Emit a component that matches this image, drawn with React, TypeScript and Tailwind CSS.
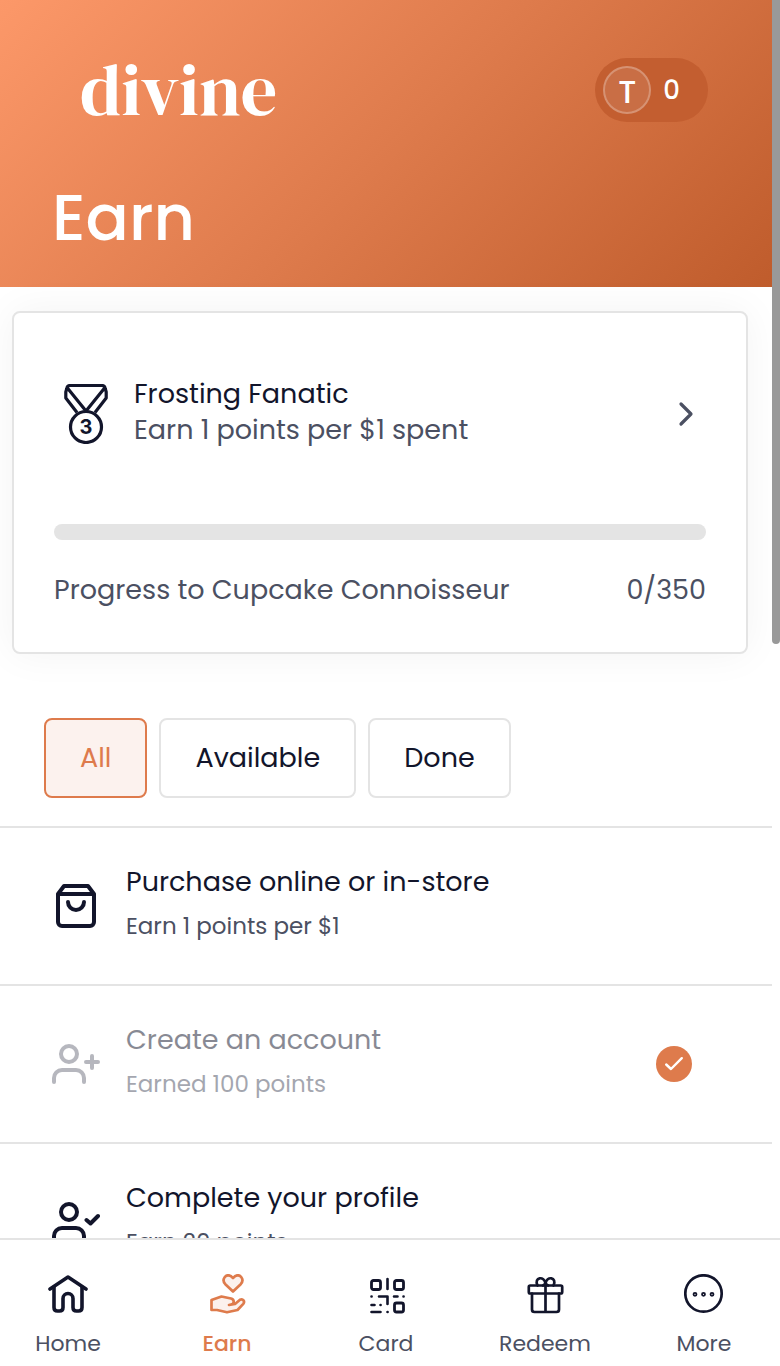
import { useState } from "react";
import type { ReactNode } from "react";

const MedalIcon = () => (
  <svg viewBox="0 0 44 60" className="h-15 w-11" fill="none" stroke="currentColor" strokeWidth="3.200" strokeLinejoin="round" aria-hidden="true">
    <path d="M2.8 4.5C3.2 2.5 4.2 1.500 6 1.500H38C39.800 1.500 40.800 2.500 41.200 4.500L42.200 8V14L31 28.500M2.800 4.500L1.800 8V14L13 28.500" />
    <path d="M3 3.500L22 27L41 3.500" />
    <circle cx="22" cy="43" r="15.500" />
    <text x="22" y="50" textAnchor="middle" fill="currentColor" stroke="none" className="font-[Inter,sans-serif] text-[20px] font-bold">3</text>
  </svg>
);

const ChevronIcon = () => (
  <svg viewBox="0 0 16 26" className="h-[26px] w-4" fill="none" stroke="currentColor" strokeWidth="3.200" strokeLinecap="round" strokeLinejoin="round" aria-hidden="true">
    <path d="M3 3L13 13L3 23" />
  </svg>
);

const BagIcon = () => (
  <svg viewBox="0 0 48 48" className="size-12" fill="none" stroke="currentColor" strokeWidth="4" strokeLinecap="round" strokeLinejoin="round" aria-hidden="true">
    <path d="M6 12L12 4H36L42 12V40A4 4 0 0 1 38 44H10A4 4 0 0 1 6 40ZM6 12H42" />
    <path d="M16 20A8 8 0 0 0 32 20" />
  </svg>
);

const PersonIcon = ({ badge }: { badge: string }) => (
  <svg viewBox="0 0 48 48" className="size-12" fill="none" stroke="currentColor" strokeWidth="4" strokeLinejoin="round" strokeLinecap="round" aria-hidden="true">
    <circle cx="17" cy="14" r="8" />
    <path d="M2 42V38A8 8 0 0 1 10 30H24A8 8 0 0 1 32 38V42" />
    <path d={badge} />
  </svg>
);

const DoneIcon = () => (
  <svg viewBox="0 0 36 36" className="size-9" role="img" aria-label="Done">
    <circle cx="18" cy="18" r="18" fill="#de7b4c" />
    <path d="M10.200 18.500L15 23L25.800 12.200" fill="none" stroke="#fff" strokeWidth="2.400" strokeLinecap="round" strokeLinejoin="round" />
  </svg>
);

const navSvg = "size-10";

const HomeIcon = () => (
  <svg viewBox="0 0 40 40" className={navSvg} fill="none" stroke="currentColor" strokeWidth="3.600" strokeLinecap="round" strokeLinejoin="round" aria-hidden="true">
    <path d="M2 15L20 3L38 15" />
    <path d="M6 13V33.500Q6 37 9.500 37H11.500Q15 37 15 33.500V24.500A5 5 0 0 1 25 24.500V33.500Q25 37 28.500 37H30.500Q34 37 34 33.500V13" />
  </svg>
);

const EarnIcon = () => (
  <svg viewBox="0 0 40 40" className={navSvg} fill="#fcf1ed" stroke="currentColor" strokeWidth="2.700" strokeLinecap="round" strokeLinejoin="round" aria-hidden="true">
    <path d="M26 17.500L18.300 10.200C14 5.500 19-.8 24 2.200L26 4L28 2.200C33-.8 38 5.500 33.700 10.200Z" />
    <path d="M4.500 26L14.500 22.500L24 24.500C27.500 25.300 27.700 30 24 30.500L22 31L28 30L33 25.800C36 24.200 38.200 27.500 36.300 29.800L30.500 36L20 38.300L10 36H4.500Z" />
  </svg>
);

const CardIcon = () => (
  <svg viewBox="0 0 40 40" className={navSvg} fill="none" stroke="currentColor" strokeWidth="2.800" strokeLinecap="round" strokeLinejoin="round" aria-hidden="true">
    <rect x="5.500" y="6.500" width="9" height="9" rx="2" />
    <rect x="28.500" y="6.500" width="9" height="9" rx="2" />
    <rect x="28.500" y="29" width="9" height="9" rx="2" />
    <path d="M21.500 5V15M5.500 22.500H5.600M13 22.500H21.500V30M28 22.500H31.500M37.500 22.500H37.600M5.500 31H8.500M14.500 31H14.600M5.500 38H14.500M21.500 38H21.600" strokeWidth="2.600" />
  </svg>
);

const RedeemIcon = () => (
  <svg viewBox="0 0 40 40" className={navSvg} fill="none" stroke="currentColor" strokeWidth="2.700" strokeLinecap="round" strokeLinejoin="round" aria-hidden="true">
    <rect x="3.800" y="11.500" width="33.400" height="8" rx="1.500" />
    <path d="M7 19.500V35.500Q7 38 9.500 38H31.500Q34 38 34 35.500V19.500M20.500 11.500V38" />
    <path d="M12.500 11.500C8.500 3 19.500 1.500 20.500 9.500C21.500 1.500 32.500 3 28.500 11.500M20.500 9.500L18 11.500M20.500 9.500L23 11.500" />
  </svg>
);

const MoreIcon = () => (
  <svg viewBox="0 0 40 40" className={navSvg} fill="none" stroke="currentColor" strokeWidth="2.700" aria-hidden="true">
    <circle cx="19.500" cy="19.500" r="18.200" />
    <g strokeWidth="1.800">
      <circle cx="11" cy="20.300" r="1.500" />
      <circle cx="19.500" cy="20.300" r="1.500" />
      <circle cx="28" cy="20.300" r="1.500" />
    </g>
  </svg>
);

type Activity = { title: string; detail: string; done: boolean; icon: ReactNode };

const activities: Activity[] = [
  { title: "Purchase online or in-store", detail: "Earn 1 points per $1", done: false, icon: <BagIcon /> },
  { title: "Create an account", detail: "Earned 100 points", done: true, icon: <PersonIcon badge="M34 22H46M40 16V28" /> },
  { title: "Complete your profile", detail: "Earn 20 points", done: false, icon: <PersonIcon badge="M34.500 22L38.500 25.500L46 18" /> },
];

const filters = ["All", "Available", "Done"];

const tabs = [
  { label: "Home", icon: <HomeIcon /> },
  { label: "Earn", icon: <EarnIcon /> },
  { label: "Card", icon: <CardIcon /> },
  { label: "Redeem", icon: <RedeemIcon /> },
  { label: "More", icon: <MoreIcon /> },
];

export default function App() {
  const [filter, setFilter] = useState("All");
  const shown = activities.filter((a) => filter === "All" || a.done === (filter === "Done"));

  return (
    <div className="flex h-screen flex-col bg-white font-[Poppins,Inter,sans-serif] text-[#12152b] [font-feature-settings:'cv11']">
      <div className="flex min-h-0 flex-1">
        <main className="min-w-0 flex-1 overflow-y-auto [scrollbar-width:none]">
          <header className="bg-linear-[135deg,#fc9869,#de7b4c_50%,#bf5c2c] px-13 pt-[58px] pb-[33px] text-white">
            <div className="flex h-16 items-center justify-between pr-3 pl-7">
              <span className="font-['DM_Serif_Display','Playfair_Display','Liberation_Serif',serif] text-[72px] leading-14">divine</span>
              <button type="button" className="flex h-16 items-center gap-3 rounded-full bg-[#c35e30] pr-7 pl-2">
                <span className="flex size-12 items-center justify-center rounded-full border-2 border-white/25 bg-white/10 pt-1 text-[32px] font-medium">T</span>
                <span className="text-[26px] font-medium">0</span>
              </button>
            </div>
            <h1 className="mt-15 text-[64px] leading-[72px] font-medium">Earn</h1>
          </header>

          <section className="mt-6 mr-6 ml-3 rounded-lg border-2 border-[#e4e4e4] bg-white px-10 pt-[63px] pb-11 shadow-[0_0_40px_rgba(0,0,0,0.05)]">
            <button type="button" className="flex w-full items-center pr-3 pl-[10px] text-left">
              <MedalIcon />
              <span className="ml-[26px] flex-1 pb-1">
                <span className="block text-[27px] leading-9">Frosting Fanatic</span>
                <span className="block text-[27px] leading-9 text-[#4b5062]">Earn 1 points per $1 spent</span>
              </span>
              <span className="text-[#4b5062]"><ChevronIcon /></span>
            </button>
            <div role="progressbar" aria-label="Progress to Cupcake Connoisseur" aria-valuemin={0} aria-valuemax={350} aria-valuenow={0} className="mt-[72px] h-4 rounded-full bg-[#e4e4e4]" />
            <div className="mt-8 flex justify-between text-[27px] leading-9 text-[#4b5062]">
              <span>Progress to Cupcake Connoisseur</span>
              <span>0/350</span>
            </div>
          </section>

          <div className="mt-16 mb-7 ml-11 flex gap-3">
            {filters.map((f) => (
              <button
                key={f}
                type="button"
                aria-pressed={filter === f}
                onClick={() => setFilter(f)}
                className={`h-20 rounded-lg border-2 px-[34px] text-[27px] ${filter === f ? "border-[#de7b4c] bg-[#fcf2ee] text-[#de7b4c]" : "border-[#e4e4e4] bg-white"}`}
              >
                {f}
              </button>
            ))}
          </div>

          <ul>
            {shown.map((a) => (
              <li key={a.title} className="flex items-center border-t-2 border-[#e4e4e4] pt-9 pr-20 pb-9 pl-13">
                <span className={a.done ? "opacity-30" : ""}>{a.icon}</span>
                <div className={`ml-[26px] flex-1 pb-1 ${a.done ? "opacity-50" : ""}`}>
                  <h2 className="text-[27px] leading-9">{a.title}</h2>
                  <p className="mt-2 text-[23px] leading-9 text-[#4b5062]">{a.detail}</p>
                </div>
                {a.done && <DoneIcon />}
              </li>
            ))}
          </ul>
        </main>
        <div className="w-2 bg-white" aria-hidden="true">
          <div className="h-[52%] rounded-b bg-[#999]" />
        </div>
      </div>

      <nav className="flex justify-between border-t-2 border-[#e4e4e4] bg-white pt-[34px] pr-7 pb-1 pl-5">
        {tabs.map((t) => (
          <a key={t.label} href="#" aria-current={t.label === "Earn" ? "page" : undefined} className={`flex w-24 flex-col items-center gap-3 ${t.label === "Earn" ? "text-[#de7b4c]" : ""}`}>
            {t.icon}
            <span className={`text-[22px] leading-9 ${t.label === "Earn" ? "font-medium" : "text-[#4b5062]"}`}>{t.label}</span>
          </a>
        ))}
      </nav>
    </div>
  );
}
